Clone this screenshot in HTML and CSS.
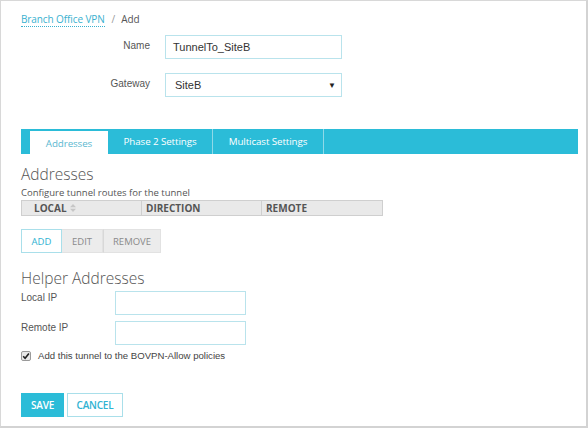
FILE: index.html
```html
<!DOCTYPE html>
<html>
<head>
<meta charset="utf-8">
<link rel="stylesheet" href="styles.css">
</head>
<body>
<div class="frame">
  <div class="crumbs"><a class="crumb-link">Branch Office VPN</a><span class="sep">/</span><span class="crumb-cur">Add</span></div>

  <div class="form-row name-row">
    <label class="flabel">Name</label>
    <div class="input">TunnelTo_SiteB</div>
  </div>
  <div class="form-row gw-row">
    <label class="flabel">Gateway</label>
    <div class="input select"><span>SiteB</span><span class="caret">&#9660;</span></div>
  </div>

  <div class="tabs">
    <div class="tab active">Addresses</div>
    <div class="tab">Phase 2 Settings</div>
    <div class="tab">Multicast Settings</div>
  </div>

  <h2 class="heading h-addr">Addresses</h2>
  <div class="desc">Configure tunnel routes for the tunnel</div>
  <div class="thead">
    <div class="th th-local">LOCAL <svg class="sort" width="6" height="8" viewBox="0 0 6 8"><path d="M0 3.2 L3 0 L6 3.2Z M0 4.8 L3 8 L6 4.8Z" fill="#c6c6c6"/></svg></div>
    <div class="th">DIRECTION</div>
    <div class="th">REMOTE</div>
  </div>

  <div class="btn-group">
    <div class="gbtn add">ADD</div>
    <div class="gbtn">EDIT</div>
    <div class="gbtn">REMOVE</div>
  </div>

  <h2 class="heading h-help">Helper Addresses</h2>
  <div class="ip-row first">
    <label class="iplabel">Local IP</label>
    <div class="input ip"></div>
  </div>
  <div class="ip-row">
    <label class="iplabel">Remote IP</label>
    <div class="input ip"></div>
  </div>
  <div class="check-row">
    <svg class="cb" width="10" height="10" viewBox="0 0 10 10"><rect x="0.5" y="0.5" width="9" height="9" rx="1.5" fill="#e9e9e9" stroke="#9a9a9a"/><path d="M2.2 5.2 L4.1 7.2 L7.9 2.4" fill="none" stroke="#222" stroke-width="1.6"/></svg>
    <span>Add this tunnel to the BOVPN-Allow policies</span>
  </div>

  <div class="actions">
    <div class="abtn save">SAVE</div>
    <div class="abtn cancel">CANCEL</div>
  </div>
</div>
</body>
</html>
```

FILE: styles.css
```css
* { box-sizing: border-box; }
html, body { margin: 0; padding: 0; background: #fff; }
body { width: 588px; height: 428px; overflow: hidden; font-family: "Liberation Sans", Arial, sans-serif; color: #444; }

.frame {
  width: 588px; height: 428px;
  border-top: 1px solid #d8d8d8;
  border-left: 1px solid #d8d8d8;
  border-right: 2px solid #d3d3d3;
  border-bottom: 2px solid #d3d3d3;
  padding: 10px 0 0 20px;
}

.crumbs { font-family: "Open Sans", sans-serif; font-size: 10px; letter-spacing: -0.1px; height: 16px; line-height: 16px; display: flex; align-items: center; }
.crumb-link { color: #3ab1cf; border-bottom: 1px dotted #3ab1cf; line-height: 13px; margin-top: 1px; }
.sep { color: #999; margin: 0 6px 0 7px; }
.crumb-cur { color: #555; }

.form-row { display: flex; align-items: center; }
.name-row { margin-top: 8px; }
.gw-row { margin-top: 14px; }
.flabel { width: 129px; text-align: right; font-size: 10px; color: #555; margin-right: 15px; margin-top: -4px; }
.input { border: 1px solid #b9e3ec; height: 24px; font-size: 11px; color: #333; display: flex; align-items: center; padding-left: 7px; background: #fff; }
.name-row .input, .gw-row .input { width: 177px; }
.select { justify-content: space-between; padding-right: 5px; padding-left: 9px; }
.caret { font-size: 8px; color: #222; }

.tabs { margin-top: 32px; width: 557px; height: 25px; background: #2bbcd8; display: flex; padding-left: 9px; align-items: flex-end; }
.tab { height: 25px; display: flex; align-items: center; justify-content: center; white-space: nowrap; font-family: "Open Sans", sans-serif; font-size: 9.8px; letter-spacing: -0.1px; color: #fff; padding: 0; border-right: 1px solid #8fd9e8; }
.tab:nth-child(2) { width: 105px; }
.tab:nth-child(3) { width: 111px; }
.tab.active { background: #fff; color: #5bb8d0; height: 23px; width: 78px; border-right: none; padding-top: 1px; }

.heading { font-family: "Open Sans", sans-serif; font-weight: 300; font-size: 15.5px; color: #555; margin: 0; line-height: 18px; }
.h-addr { margin-top: 11px; }
.desc { font-family: "Open Sans", sans-serif; font-size: 9.5px; color: #555; margin-top: 3px; line-height: 13px; }

.thead { display: flex; width: 362px; height: 16px; background: #e9e9e9; border: 1px solid #cfcfcf; margin-top: 1px; }
.th { width: 120px; font-family: "Open Sans", sans-serif; font-weight: 700; font-size: 10px; color: #555; line-height: 14px; padding-left: 4px; border-right: 1px solid #cfcfcf; white-space: nowrap; }
.th:last-child { border-right: none; flex: 1; }
.th-local { padding-left: 12px; }
.sort { vertical-align: 0px; margin-left: 1px; }

.btn-group { display: flex; margin-top: 13px; }
.gbtn { height: 24px; display: flex; align-items: center; justify-content: center; font-family: "Open Sans", sans-serif; font-size: 9.5px; color: #8a8a8a; background: #ececec; border: 1px solid #e2e2e2; }
.gbtn:nth-child(2) { width: 41px; border-left: none; }
.gbtn:nth-child(3) { width: 58px; border-left: 1px solid #d8d8d8; }
.gbtn.add { width: 41px; background: #fff; color: #2fb2d2; border: 1px solid #a9dfea; }

.h-help { margin-top: 16px; }
.ip-row { display: flex; align-items: flex-start; margin-top: 6px; }
.ip-row.first { margin-top: 4px; }
.iplabel { width: 94px; font-size: 10px; color: #555; padding-top: 1px; }
.input.ip { width: 131px; height: 24px; }

.check-row { display: flex; align-items: center; margin-top: 5px; font-size: 9.6px; color: #444; }
.cb { margin-right: 7px; }

.actions { display: flex; margin-top: 32px; gap: 3px; }
.abtn { height: 24px; display: flex; align-items: center; justify-content: center; font-family: "Open Sans", sans-serif; font-weight: 600; font-size: 10px; letter-spacing: -0.2px; }
.save { width: 43px; background: #2bbcd8; color: #fff; }
.cancel { width: 56px; border: 1px solid #a9dfea; color: #2fb2d2; background: #fff; }
```
